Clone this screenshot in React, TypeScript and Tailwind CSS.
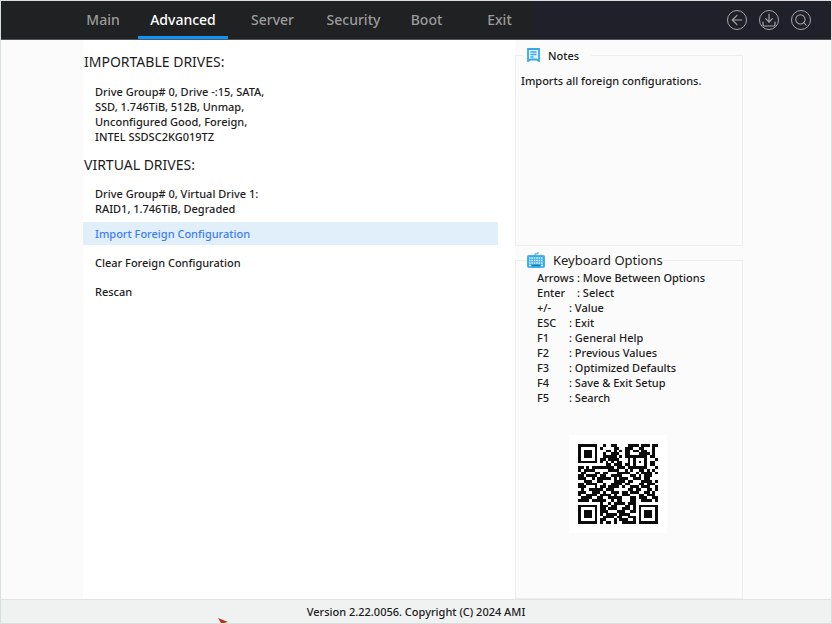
import React from 'react';
import { ArrowLeft, Download, Search } from 'lucide-react';

// 29x29 modules, 1 = dark
const QR_ROWS = [
  '11111110010011000011110111011',
  '10000010100001100111001100010',
  '10111010001101010110110110010',
  '10111010010011100110001111010',
  '10111010011111010111111110110',
  '10000010110111100010100010001',
  '11111110101010110010101010110',
  '00000000001101110110100010110',
  '11010111111110111011111110001',
  '10111100000111100101001101010',
  '01100011011000111110010111101',
  '11011110110011110001101011100',
  '11100101111101011100111011000',
  '00111001100001111011000111101',
  '11011110010011110110001101110',
  '11100010110111101001110111001',
  '01001111101110000011011001101',
  '11100111010011101101110011010',
  '10011110111101001110001101110',
  '01111001100111110001101110011',
  '11110111110010110001100111101',
  '00000000100101111011100000000',
  '11111110111011000110101111111',
  '10000010110111001110101000001',
  '10111010111000111001101011101',
  '10111010101111011110001011101',
  '10111010011110110011101011101',
  '10000010110001011100101000001',
  '11111110101101001111101111111',
];

const qrPath = QR_ROWS.map((row, y) =>
  row
    .split('')
    .map((bit, x) => (bit === '1' ? `M${x} ${y}h1v1h-1z` : ''))
    .join('')
).join('');

const tabs = [
  { label: 'Main', width: 'w-[70px]' },
  { label: 'Advanced', width: 'w-[90px]' },
  { label: 'Server', width: 'w-[89px]' },
  { label: 'Security', width: 'w-[73px]' },
  { label: 'Boot', width: 'w-[73px]' },
  { label: 'Exit', width: 'w-[73px]' },
];

const tools = [
  { label: 'Back', icon: <ArrowLeft className="size-4" strokeWidth={1.8} /> },
  { label: 'Save', icon: <Download className="size-4" strokeWidth={1.8} /> },
  { label: 'Search', icon: <Search className="size-3.5" strokeWidth={1.8} /> },
];

const actions = ['Import Foreign Configuration', 'Clear Foreign Configuration', 'Rescan'];

const shortcuts = [
  { name: 'Arrows', gap: 'w-10', text: 'Move Between Options' },
  { name: 'Enter', gap: 'w-10', text: 'Select' },
  { name: '+/-', gap: 'w-8', text: 'Value' },
  { name: 'ESC', gap: 'w-8', text: 'Exit' },
  { name: 'F1', gap: 'w-8', text: 'General Help' },
  { name: 'F2', gap: 'w-8', text: 'Previous Values' },
  { name: 'F3', gap: 'w-8', text: 'Optimized Defaults' },
  { name: 'F4', gap: 'w-8', text: 'Save & Exit Setup' },
  { name: 'F5', gap: 'w-8', text: 'Search' },
];

const NotesIcon = () => (
  <svg viewBox="0 0 13 14" className="w-[13px] h-3.5" fill="none" stroke="#38a9e8">
    <path d="M1 1h11v12l-2.5-1.5h-6L1 13z" fill="#e0f4fd" strokeWidth="1.8" />
    <path d="M3.5 4h6M3.5 6.5h6M3.5 9h3" strokeWidth="1.3" />
  </svg>
);

const KeyboardIcon = () => (
  <svg viewBox="0 0 18 16" className="w-[18px] h-4">
    <path d="M8 3V1.8h3V0" fill="none" stroke="#4a9bd0" />
    <rect x="0.5" y="3.5" width="17" height="12" rx="1" fill="#3aaced" stroke="#46b0ea" />
    <path
      d="M2 6h14M2 8.5h14M2 11h14"
      stroke="#e5f6ff"
      strokeWidth="1.5"
      strokeDasharray="1.6 0.8"
    />
    <path d="M2 13.5h2M14 13.5h2" stroke="#e5f6ff" strokeWidth="1.3" />
    <path d="M5 13.5h8" stroke="#1679b8" strokeWidth="1.3" />
  </svg>
);

const App: React.FC = () => {
  return (
    <div className="min-h-screen flex flex-col bg-[#fbfbfb] border border-[#d8dfdf] font-['Noto_Sans',sans-serif] font-medium text-[11px] leading-[15px] text-[#1c1c1c]">
      <header className="h-[39px] flex items-stretch justify-between bg-[#20202a] border-b border-[#555555]">
        <nav className="flex w-[532px] pl-[67px] bg-[#202122]">
          {tabs.map((tab) => (
            <button
              key={tab.label}
              className={`${tab.width} shrink-0 pt-0.5 text-sm border-b-[3px] ${
                tab.label === 'Advanced' ? 'text-white border-[#0f93f5]' : 'text-[#9b9b9b] border-transparent'
              }`}
            >
              {tab.label}
            </button>
          ))}
        </nav>
        <div className="flex items-center gap-3 pr-5">
          {tools.map((tool) => (
            <button
              key={tool.label}
              aria-label={tool.label}
              className="size-5 flex items-center justify-center rounded-full border border-[#a5a5a5] text-[#a5a5a5]"
            >
              {tool.icon}
            </button>
          ))}
        </div>
      </header>

      <div className="flex-1 flex">
        <main className="flex-1 ml-[82px] pr-[17px] pt-3 bg-white">
          <h2 className="pl-px text-sm leading-5 font-normal">IMPORTABLE DRIVES:</h2>
          <p className="mt-3 ml-3">
            Drive Group# 0, Drive -:15, SATA, <br />
            SSD, 1.746TiB, 512B, Unmap, <br />
            Unconfigured Good, Foreign, <br />
            INTEL SSDSC2KG019TZ
          </p>
          <h2 className="mt-[11px] pl-px text-sm leading-5 font-normal">VIRTUAL DRIVES:</h2>
          <p className="mt-[11px] ml-3">
            Drive Group# 0, Virtual Drive 1: <br />
            RAID1, 1.746TiB, Degraded
          </p>
          <div className="mt-1.5 flex flex-col gap-1.5">
            {actions.map((action, index) => (
              <button
                key={action}
                className={`h-[23px] pl-3 text-left ${index === 0 ? 'bg-[#e0effa] text-[#3f7df6]' : ''}`}
              >
                {action}
              </button>
            ))}
          </div>
        </main>

        <aside className="w-[316px] pr-[88px] pt-[5px] flex flex-col">
          <fieldset className="h-[201px] border border-[#eeeeee] px-[5px]">
            <legend className="ml-0.5 px-1 h-5 flex items-center gap-2">
              <NotesIcon />
              <span className="pr-2">Notes</span>
            </legend>
            <p className="mt-2">Imports all foreign configurations.</p>
          </fieldset>

          <fieldset className="mt-1 flex-1 border border-[#eeeeee] px-[21px]">
            <legend className="-ml-2.5 h-5 flex items-center gap-2 text-[13px] font-normal">
              <KeyboardIcon />
              <span>Keyboard Options</span>
            </legend>
            {shortcuts.map((shortcut) => (
              <p key={shortcut.name} className="flex">
                <span className={shortcut.gap}>{shortcut.name}</span>
                <span>: {shortcut.text}</span>
              </p>
            ))}
            <div className="mt-[30px] ml-8 w-[98px] bg-white p-[9px]">
              <svg viewBox="0 0 29 29" className="w-full" role="img" aria-label="QR code">
                <path d={qrPath} fill="#0c0c0c" shapeRendering="crispEdges" />
              </svg>
            </div>
          </fieldset>
        </aside>
      </div>

      <footer className="relative h-6 flex items-center justify-center bg-[#eff2f1] border-t border-[#dfe5e5]">
        <span>Version 2.22.0056. Copyright (C) 2024 AMI</span>
        <svg viewBox="0 0 10 5" className="absolute left-[217px] bottom-0 w-2.5 h-[5px]">
          <path d="M0 0l10 4-4 1H3z" fill="#b83216" />
        </svg>
      </footer>
    </div>
  );
};

export default App;
